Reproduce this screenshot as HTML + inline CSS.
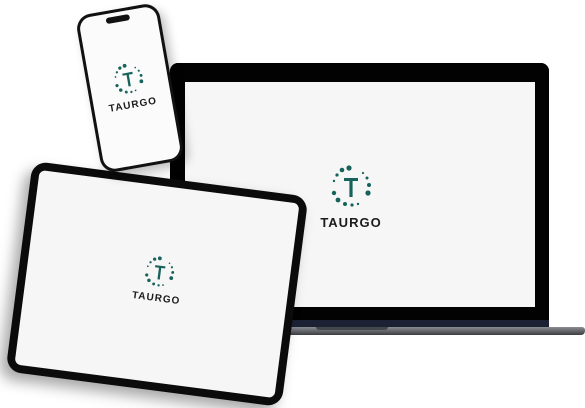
<!DOCTYPE html>
<html><head><meta charset="utf-8"><style>
body{margin:0;width:585px;height:408px;background:#fff;position:relative;overflow:hidden;font-family:"Liberation Sans",sans-serif}
.abs{position:absolute}
.logo{position:absolute;text-align:center}
.logo .t{font-weight:bold;color:#1b1b1b;letter-spacing:1px}
</style></head><body>
<!-- laptop -->
<div class="abs" style="left:200px;top:327px;width:385px;height:8px;background:linear-gradient(#8a8d92,#5b5e63 60%,#3a3c40);border-radius:0 3px 4px 0"></div>
<div class="abs" style="left:316px;top:327px;width:72px;height:3px;background:#44474c;border-radius:0 0 6px 6px"></div>
<div class="abs" style="left:170px;top:63px;width:379px;height:264px;background:#1c2233;border-radius:8px 8px 0 0"></div>
<div class="abs" style="left:170px;top:63px;width:379px;height:257px;background:#020202;border-radius:8px 8px 0 0"></div>
<div class="abs" style="left:185px;top:82px;width:350px;height:225px;background:#f6f6f6"></div>
<div class="logo" style="left:310px;top:165px;width:82px">
<svg width="44" height="44" viewBox="-22 -22 44 44"><g fill="#17635b">
<circle cx="-2" cy="-19" r="2.6"/><circle cx="-9" cy="-17" r="2.3"/><circle cx="-14" cy="-12" r="1.6"/><circle cx="-17" cy="-6" r="1.2"/>
<circle cx="-17" cy="6" r="2.2"/><circle cx="-13" cy="13" r="2.4"/><circle cx="-6" cy="17" r="2"/><circle cx="1" cy="18" r="1.6"/><circle cx="7" cy="17" r="1.2"/>
<circle cx="17" cy="6" r="2.6"/><circle cx="18" cy="-2" r="2"/><circle cx="16" cy="-9" r="1.5"/><circle cx="12" cy="-14" r="1.1"/>
<path d="M-7,-9H7V-6H1.6V10H-1.6V-6H-7Z"/></g></svg>
<div class="t" style="font-size:13px;margin-top:1px">TAURGO</div></div>
<!-- tablet -->
<div class="abs" style="left:18px;top:178px;width:278px;height:212px;background:#0b0b0b;border-radius:15px;transform:rotate(7.4deg);box-shadow:-6px 8px 14px rgba(0,0,0,.35)">
<div class="abs" style="left:8px;top:8px;right:8px;bottom:8px;background:#f6f6f6;border-radius:6px"></div>
<div class="logo" style="left:105px;top:78px;width:70px">
<svg width="32" height="32" viewBox="-22 -22 44 44"><g fill="#17635b">
<circle cx="-2" cy="-19" r="2.6"/><circle cx="-9" cy="-17" r="2.3"/><circle cx="-14" cy="-12" r="1.6"/><circle cx="-17" cy="-6" r="1.2"/>
<circle cx="-17" cy="6" r="2.2"/><circle cx="-13" cy="13" r="2.4"/><circle cx="-6" cy="17" r="2"/><circle cx="1" cy="18" r="1.6"/><circle cx="7" cy="17" r="1.2"/>
<circle cx="17" cy="6" r="2.6"/><circle cx="18" cy="-2" r="2"/><circle cx="16" cy="-9" r="1.5"/><circle cx="12" cy="-14" r="1.1"/>
<path d="M-7,-9H7V-6H1.6V10H-1.6V-6H-7Z"/></g></svg>
<div class="t" style="font-size:10px">TAURGO</div></div>
</div>
<!-- phone -->
<div class="abs" style="left:88px;top:8px;width:84px;height:160px;background:#111;border-radius:15px;transform:rotate(-10deg);box-shadow:4px 6px 10px rgba(0,0,0,.25)">
<div class="abs" style="left:3px;top:3px;right:3px;bottom:3px;background:#fbfbfb;border-radius:12px"></div>
<div class="abs" style="left:30px;top:7px;width:24px;height:6px;background:#111;border-radius:4px"></div>
<div class="logo" style="left:10px;top:55px;width:64px">
<svg width="32" height="32" viewBox="-22 -22 44 44"><g fill="#17635b">
<circle cx="-2" cy="-19" r="2.6"/><circle cx="-9" cy="-17" r="2.3"/><circle cx="-14" cy="-12" r="1.6"/><circle cx="-17" cy="-6" r="1.2"/>
<circle cx="-17" cy="6" r="2.2"/><circle cx="-13" cy="13" r="2.4"/><circle cx="-6" cy="17" r="2"/><circle cx="1" cy="18" r="1.6"/><circle cx="7" cy="17" r="1.2"/>
<circle cx="17" cy="6" r="2.6"/><circle cx="18" cy="-2" r="2"/><circle cx="16" cy="-9" r="1.5"/><circle cx="12" cy="-14" r="1.1"/>
<path d="M-7,-9H7V-6H1.6V10H-1.6V-6H-7Z"/></g></svg>
<div class="t" style="font-size:10px">TAURGO</div></div>
</div>
</body></html>
